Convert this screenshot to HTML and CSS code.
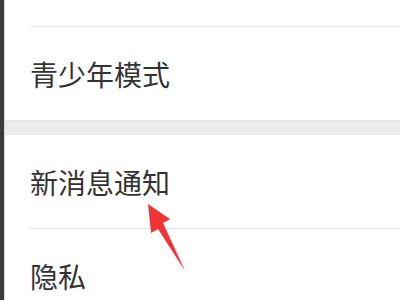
FILE: index.html
```html
<!DOCTYPE html>
<html lang="zh">
<head>
<meta charset="utf-8">
<link rel="stylesheet" href="styles.css">
</head>
<body>
<div class="page">
  <div class="edge"></div>
  <div class="list">
    <div class="spacer"></div>
    <div class="divider"></div>
    <div class="row">青少年模式</div>
    <div class="band"></div>
    <div class="row">新消息通知</div>
    <div class="divider"></div>
    <div class="row">隐私</div>
  </div>
  <svg class="arrow" width="400" height="300" viewBox="0 0 400 300">
    <path d="M148 204 L170 219 L163 223 L185 271 L158 229 L151 233 Z" fill="#f03333"/>
  </svg>
</div>
</body>
</html>
```
FILE: styles.css
```css
html, body {
  margin: 0;
  padding: 0;
  background: #ffffff;
}
.page {
  position: relative;
  display: flex;
  width: 400px;
  height: 300px;
  overflow: hidden;
}
.edge {
  width: 4px;
  background: #3a3a3a;
  border-right: 1px solid #d8d8d8;
  flex: none;
}
.list {
  flex: 1;
  display: flex;
  flex-direction: column;
}
.spacer {
  height: 26px;
  flex: none;
}
.divider {
  height: 1px;
  margin-left: 24px;
  background: #e6e6e6;
  flex: none;
}
.row {
  height: 93px;
  flex: none;
  display: flex;
  align-items: center;
  padding-left: 25px;
  font-family: "Noto Sans CJK SC", "Noto Sans", sans-serif;
  font-size: 28px;
  line-height: 1;
  color: #333333;
}
.band {
  height: 15px;
  flex: none;
  background: #ececec;
  border-top: 1px solid #e2e2e2;
  box-sizing: border-box;
}
.arrow {
  position: absolute;
  left: 0;
  top: 0;
}
```
